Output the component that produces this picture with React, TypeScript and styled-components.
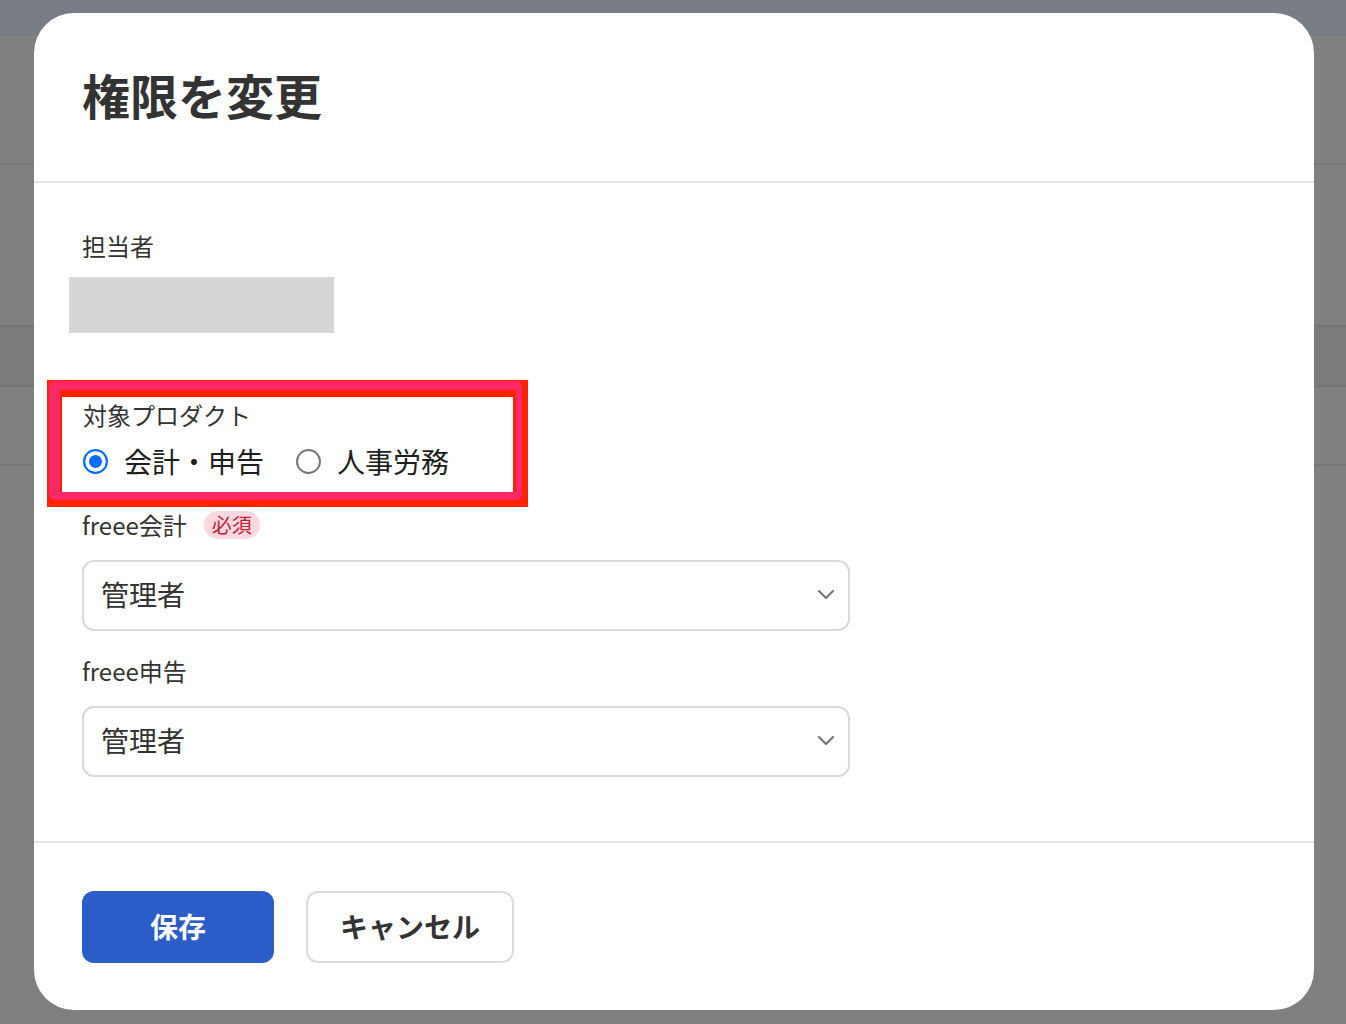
import React from 'react'
import styled, { createGlobalStyle } from 'styled-components'

const GlobalStyle = createGlobalStyle`
  html, body {
    margin: 0;
    padding: 0;
  }
  body {
    font-family: "Noto Sans CJK JP", "Noto Sans", sans-serif;
    background: #808080;
  }
  * {
    box-sizing: border-box;
  }
`

const Screen = styled.div`
  position: relative;
  width: 1346px;
  height: 1024px;
  overflow: hidden;
  background: #808080;
`

// dimmed page behind the dialog
const BackdropBar = styled.div`
  height: 36px;
  background: #787c85;
`

const BackdropRow = styled.div<{ $h: number; $shade?: boolean }>`
  box-sizing: content-box;
  height: ${p => p.$h}px;
  background: ${p => (p.$shade ? '#7b7b7b' : '#808080')};
  border-bottom: 2px solid #767676;
`

const Dialog = styled.section`
  position: absolute;
  top: 13px;
  left: 34px;
  width: 1280px;
  height: 997px;
  background: #fff;
  border-radius: 40px;
  display: flex;
  flex-direction: column;
  overflow: hidden;
`

const DialogHeader = styled.header`
  box-sizing: content-box;
  height: 162px;
  padding: 0 48px 6px;
  display: flex;
  align-items: center;
  border-bottom: 2px solid #e6e6e6;
`

const Title = styled.h1`
  margin: 0;
  font-size: 48px;
  line-height: 1;
  font-weight: 700;
  color: #333;
`

const DialogBody = styled.div`
  flex: 1;
  padding: 45px 48px 0;
  display: flex;
  flex-direction: column;
  align-items: flex-start;
`

const FieldLabel = styled.div<{ $gap?: number }>`
  display: flex;
  align-items: center;
  gap: 17px;
  margin-top: ${p => p.$gap ?? 0}px;
  font-size: 24px;
  line-height: 36px;
  color: #333;
`

const RequiredBadge = styled.span`
  display: inline-flex;
  align-items: center;
  height: 28px;
  padding: 0 8px;
  border-radius: 14px;
  background: #fbd9de;
  color: #c4203c;
  font-size: 20px;
  line-height: 1;
`

const Redacted = styled.div`
  width: 265px;
  height: 56px;
  margin: 13px 0 0 -13px;
  background: #d6d6d6;
`

// annotation frame around the product choice
const Highlight = styled.div`
  position: relative;
  box-sizing: content-box;
  width: 430px;
  height: 84px;
  margin: 47px 0 0 -35px;
  padding: 0 0 11px 21px;
  border: 15px solid #ff2200;
  border-top-width: 17px;

  &::before {
    content: '';
    position: absolute;
    top: -16px;
    left: -13px;
    right: -9px;
    bottom: -8px;
    border-style: solid;
    border-color: #ff2866;
    border-width: 9px 6px 8px 11px;
    border-radius: 6px;
    pointer-events: none;
  }
`

const RadioGroup = styled.div`
  display: flex;
  align-items: center;
  gap: 32px;
  height: 40px;
  margin-top: 8px;
`

const RadioOption = styled.label`
  display: flex;
  align-items: center;
  gap: 16px;
  font-size: 28px;
  line-height: 40px;
  color: #1e1e1e;
`

const RadioInput = styled.input`
  appearance: none;
  width: 25px;
  height: 25px;
  margin: 0;
  border-radius: 50%;
  border: 2px solid #777;
  background: #fff;

  &:checked {
    border-color: #0b6cf5;
    background: #0b6cf5;
    box-shadow: inset 0 0 0 4px #fff;
  }
`

const SelectBox = styled.div`
  width: 768px;
  height: 71px;
  margin-top: 17px;
  padding: 0 13px 3px 17px;
  display: flex;
  align-items: center;
  justify-content: space-between;
  border: 2px solid #dadada;
  border-radius: 12px;
  font-size: 28px;
  color: #333;
`

const DialogFooter = styled.footer`
  box-sizing: content-box;
  height: 72px;
  padding: 48px 48px 47px;
  display: flex;
  gap: 32px;
  border-top: 2px solid #e6e6e6;
`

const PrimaryButton = styled.button`
  min-width: 192px;
  height: 72px;
  padding: 0 0 2px;
  border: none;
  border-radius: 12px;
  background: #2b5cc8;
  color: #fff;
  font-family: inherit;
  font-size: 28px;
  font-weight: 700;
`

const SecondaryButton = styled.button`
  height: 72px;
  padding: 0 32px 2px;
  border: 2px solid #dcdcdc;
  border-radius: 12px;
  background: #fff;
  color: #333;
  font-family: inherit;
  font-size: 28px;
  font-weight: 700;
`

const Chevron = () => (
  <svg width="18" height="11" viewBox="0 0 18 11" fill="none">
    <path d="M2 2l7 7 7-7" stroke="#777" strokeWidth="2.2" strokeLinecap="round" strokeLinejoin="round" />
  </svg>
)

const RoleSelect = ({ value }: { value: string }) => (
  <SelectBox role="combobox">
    <span>{value}</span>
    <Chevron />
  </SelectBox>
)

const App = () => {
  return (
    <Screen>
      <GlobalStyle />
      <BackdropBar />
      <BackdropRow $h={127} />
      <BackdropRow $h={160} />
      <BackdropRow $h={58} $shade />
      <BackdropRow $h={77} />

      <Dialog>
        <DialogHeader>
          <Title>権限を変更</Title>
        </DialogHeader>

        <DialogBody>
          <FieldLabel>担当者</FieldLabel>
          <Redacted />

          <Highlight>
            <FieldLabel>対象プロダクト</FieldLabel>
            <RadioGroup>
              <RadioOption>
                <RadioInput type="radio" name="product" defaultChecked />
                会計・申告
              </RadioOption>
              <RadioOption>
                <RadioInput type="radio" name="product" />
                人事労務
              </RadioOption>
            </RadioGroup>
          </Highlight>

          <FieldLabel>
            freee会計
            <RequiredBadge>必須</RequiredBadge>
          </FieldLabel>
          <RoleSelect value="管理者" />

          <FieldLabel $gap={22}>freee申告</FieldLabel>
          <RoleSelect value="管理者" />
        </DialogBody>

        <DialogFooter>
          <PrimaryButton>保存</PrimaryButton>
          <SecondaryButton>キャンセル</SecondaryButton>
        </DialogFooter>
      </Dialog>
    </Screen>
  )
}

export default App
